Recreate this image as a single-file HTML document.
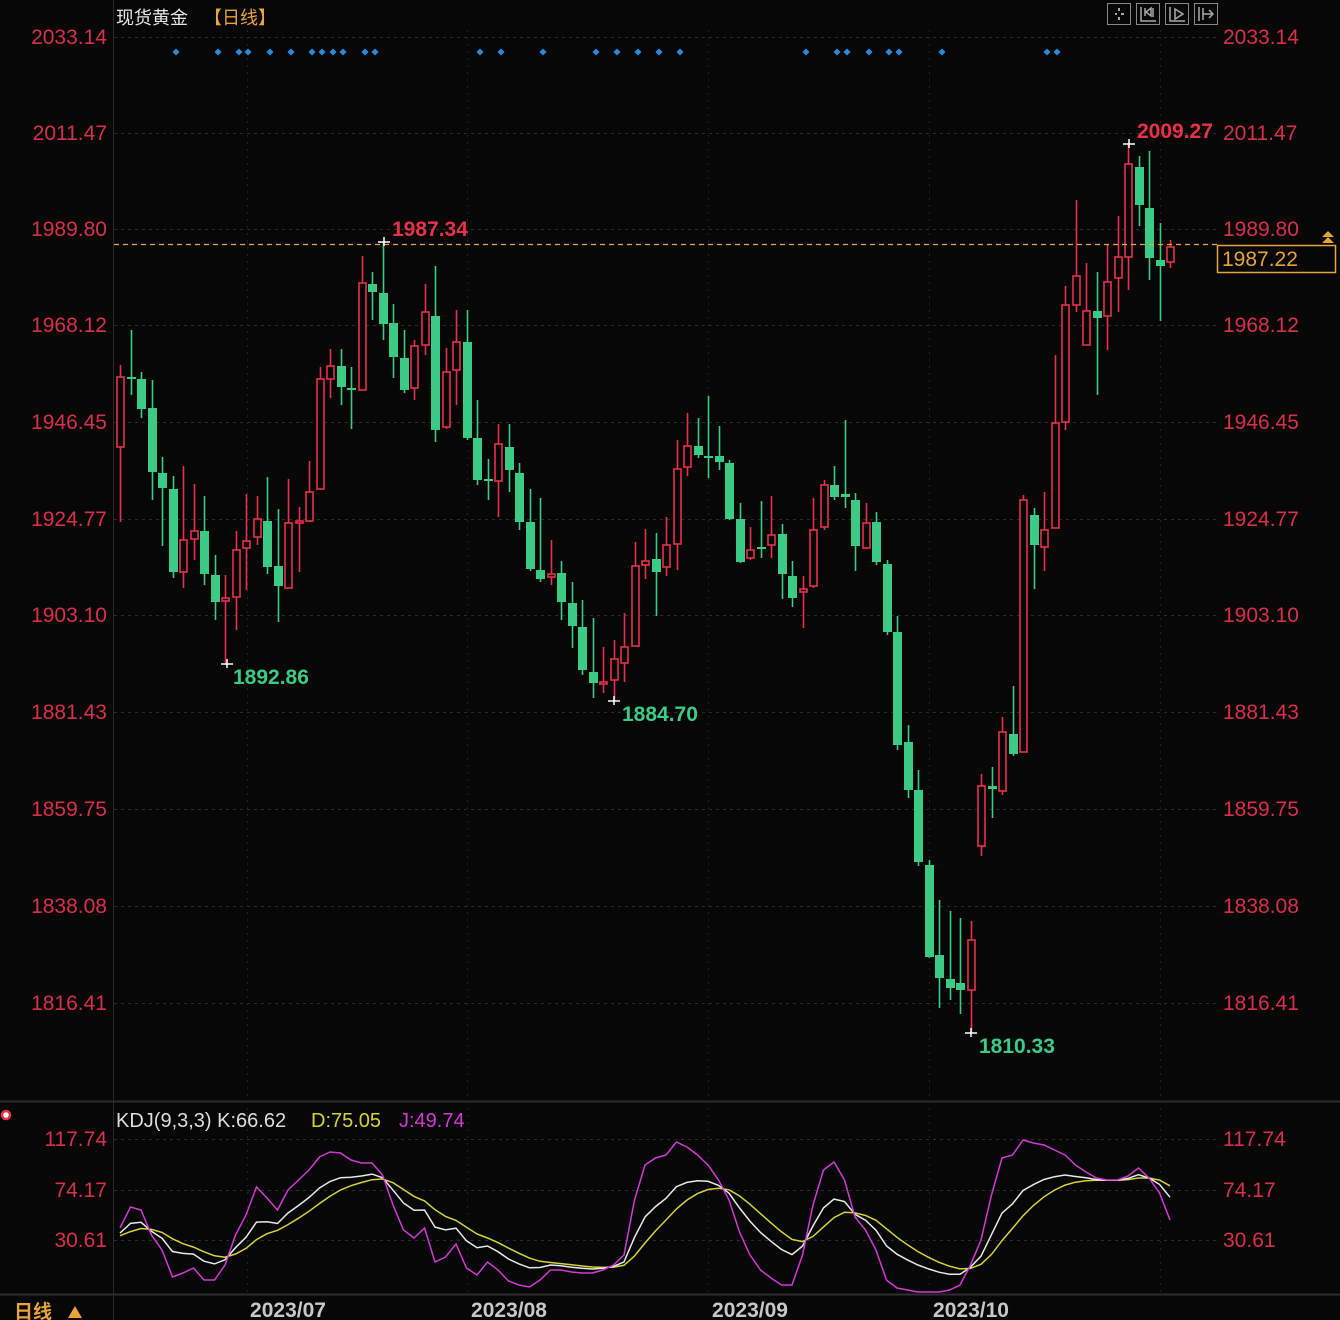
<!DOCTYPE html>
<html><head><meta charset="utf-8">
<style>
html,body{margin:0;padding:0;background:#070707;width:1340px;height:1320px;overflow:hidden}
svg{display:block}
text{font-family:"Liberation Sans","Noto Sans CJK SC",sans-serif}
</style></head>
<body>
<svg id="s" width="1340" height="1320" xmlns="http://www.w3.org/2000/svg"></svg>
<script>
const S=document.getElementById('s');let h='';
const R='#e8304a',G='#3ccb84';
h+='<rect x="0" y="0" width="1340" height="1320" fill="#070707"/>';
h+='<line x1="113.5" y1="0" x2="113.5" y2="1320" stroke="#2a2a2a"/>';
h+='<line x1="0" y1="1101.5" x2="1340" y2="1101.5" stroke="#2e2e2e" stroke-width="2"/>';
h+='<line x1="0" y1="1294.5" x2="1340" y2="1294.5" stroke="#2e2e2e" stroke-width="2"/>';
const levels=[['2033.14',37],['2011.47',133],['1989.80',229],['1968.12',325],['1946.45',422],['1924.77',519],['1903.10',615],['1881.43',712],['1859.75',809],['1838.08',906],['1816.41',1003]];
levels.forEach(([t,y])=>{
 h+=`<line x1="114" y1="${y+.5}" x2="1217" y2="${y+.5}" stroke="#2c2c2c" stroke-dasharray="3,4"/>`;
 h+=`<text x="107" y="${y+7}" fill="#d8304a" font-size="21" text-anchor="end">${t}</text>`;
 h+=`<text x="1223" y="${y+7}" fill="#d8304a" font-size="21">${t}</text>`;
});
[247,467,708,929,1160].forEach(x=>{h+=`<line x1="${x+.5}" y1="30" x2="${x+.5}" y2="1294" stroke="#222" stroke-dasharray="2,5"/>`});
[['117.74',1139],['74.17',1190],['30.61',1240]].forEach(([t,y])=>{
 h+=`<line x1="114" y1="${y+.5}" x2="1217" y2="${y+.5}" stroke="#2c2c2c" stroke-dasharray="3,4"/>`;
 h+=`<text x="107" y="${y+7}" fill="#d8304a" font-size="21" text-anchor="end">${t}</text>`;
 h+=`<text x="1223" y="${y+7}" fill="#d8304a" font-size="21">${t}</text>`;
});
h+='<text x="116" y="24" fill="#e6e6e6" font-size="18">现货黄金</text><text x="204" y="24" fill="#e8a33a" font-size="18">【日线】</text>';
for(let i=0;i<4;i++){const x=1107+i*29;h+=`<rect x="${x+.5}" y="3.5" width="23" height="21" fill="none" stroke="#888"/>`;}
h+='<g stroke="#aaa" stroke-width="2"><line x1="1115" y1="14" x2="1117" y2="14"/><line x1="1121" y1="14" x2="1124" y2="14"/><line x1="1119" y1="8" x2="1119" y2="11"/><line x1="1119" y1="17" x2="1119" y2="20"/></g>';
h+='<g stroke="#aaa" stroke-width="1.5" fill="none"><path d="M1141 7v14h15M1145 8v8M1153 8v9M1146 12l5-4v8z"/><path d="M1170 7v14h15M1175 9l8 5-8 5z"/><path d="M1199 7v14M1203 8v12M1203 14h10M1209 10l4 4-4 4"/></g>';
[176,218,239,248,270,291,312,322,333,343,365,375,480,501,543,596,617,638,659,680,806,837,847,869,889,899,942,1047,1057].forEach(x=>{h+=`<rect x="${x-2.5}" y="49.5" width="5" height="5" fill="#2a8ad8" transform="rotate(45 ${x} 52)"/>`});
const C=[[377,447,365,522,'r'],[377,378,330,395,'g'],[379,409,372,418,'g'],[408,472,380,500,'g'],[473,488,457,546,'g'],[489,572,476,578,'g'],[540,572,466,588,'r'],[531,539,484,560,'r'],[531,574,496,585,'g'],[575,602,555,620,'g'],[598,601,575,665,'r'],[550,597,531,630,'r'],[541,548,494,590,'r'],[519,537,496,545,'r'],[521,567,477,574,'g'],[566,586,509,622,'g'],[523,588,479,575,'r'],[521,523,507,572,'r'],[492,521,461,522,'r'],[379,489,367,490,'r'],[366,379,349,398,'r'],[366,387,349,405,'g'],[388,390,367,429,'g'],[283,390,256,390,'r'],[284,292,272,320,'g'],[293,324,242,340,'g'],[323,357,304,378,'g'],[358,390,330,393,'g'],[346,388,340,400,'r'],[312,345,284,355,'r'],[316,430,266,442,'g'],[372,427,348,429,'r'],[342,370,310,405,'r'],[342,438,310,440,'g'],[438,480,400,485,'g'],[479,481,459,500,'g'],[444,481,424,517,'r'],[447,470,424,492,'g'],[473,522,463,530,'g'],[522,569,489,571,'g'],[570,579,498,582,'g'],[574,577,540,585,'r'],[573,602,561,620,'g'],[603,626,582,648,'g'],[627,670,600,675,'g'],[672,683,618,698,'g'],[682,683,647,693,'r'],[659,680,640,701,'r'],[647,663,613,682,'r'],[566,646,542,646,'r'],[561,565,529,579,'r'],[559,572,533,616,'g'],[545,567,517,576,'r'],[469,544,440,570,'r'],[446,467,413,476,'r'],[446,455,418,458,'g'],[456,458,396,478,'g'],[456,462,426,470,'g'],[463,519,460,520,'g'],[519,562,503,563,'g'],[550,558,527,560,'r'],[547,549,501,558,'g'],[535,545,496,558,'r'],[534,574,524,599,'g'],[576,598,561,607,'g'],[589,592,576,628,'r'],[530,586,498,588,'r'],[485,527,480,530,'r'],[485,497,466,500,'g'],[494,497,420,508,'g'],[500,546,493,571,'g'],[523,548,503,549,'r'],[522,562,512,565,'g'],[564,632,560,635,'g'],[632,745,616,750,'g'],[742,790,725,798,'g'],[790,862,770,866,'g'],[865,957,860,958,'g'],[955,978,900,1008,'g'],[979,988,911,1000,'g'],[983,990,918,1014,'g'],[940,990,921,1033,'r'],[786,846,774,856,'r'],[786,789,767,818,'g'],[732,791,717,795,'r'],[734,754,686,756,'g'],[500,752,495,752,'r'],[515,545,508,589,'g'],[530,547,492,571,'r'],[423,528,355,528,'r'],[305,422,286,430,'r'],[276,305,200,312,'r'],[311,345,263,345,'r'],[311,318,272,395,'g'],[282,316,245,350,'r'],[257,278,216,312,'r'],[164,257,145,290,'r'],[167,205,156,226,'g'],[208,258,151,280,'g'],[260,266,223,321,'g'],[247,262,240,268,'r']];
C.forEach((c,i)=>{const x=Math.round(120+i*10.5)+.5;const [t,b,hi,lo,k]=c;
 if(k=='r'){h+=`<line x1="${x}" y1="${hi}" x2="${x}" y2="${t}" stroke="${R}" stroke-width="1.6"/><line x1="${x}" y1="${b}" x2="${x}" y2="${lo}" stroke="${R}" stroke-width="1.6"/><rect x="${x-3.5}" y="${t}" width="7" height="${Math.max(b-t,2)}" fill="#070707" stroke="${R}" stroke-width="1.6"/>`;}
 else{h+=`<line x1="${x}" y1="${hi}" x2="${x}" y2="${lo}" stroke="${G}" stroke-width="1.6"/><rect x="${x-4.5}" y="${t}" width="9" height="${Math.max(b-t,2)}" fill="${G}"/>`;}
});
h+='<line x1="114" y1="244.5" x2="1217" y2="244.5" stroke="#e8a33a" stroke-dasharray="5,4" stroke-width="1.3"/>';
h+='<rect x="1217.5" y="245.5" width="118" height="27" fill="#070707" stroke="#e8a33a" stroke-width="1.5"/><text x="1222" y="266" fill="#e8a33a" font-size="21">1987.22</text>';
h+='<path d="M1322 237l6-6 6 6zM1322 243l6-6 6 6z" fill="#e8a33a"/>';
function cross(x,y){h+=`<path d="M${x-6} ${y}h12M${x} ${y-5}v9" stroke="#fff" stroke-width="1.5"/>`;}
cross(384,242);cross(1129,144);cross(227,664);cross(614,701);cross(971,1033);
h+=`<text x="392" y="236" fill="${R}" font-size="21" font-weight="bold">1987.34</text>`;
h+=`<text x="1137" y="138" fill="${R}" font-size="21" font-weight="bold">2009.27</text>`;
h+=`<text x="233" y="684" fill="${G}" font-size="21" font-weight="bold">1892.86</text>`;
h+=`<text x="622" y="721" fill="${G}" font-size="21" font-weight="bold">1884.70</text>`;
h+=`<text x="979" y="1053" fill="${G}" font-size="21" font-weight="bold">1810.33</text>`;
h+='<text x="116" y="1127" font-size="20" fill="#ddd">KDJ(9,3,3) K:66.62</text><text x="311" y="1127" font-size="20" fill="#d6d23a">D:75.05</text><text x="399" y="1127" font-size="20" fill="#d23ad6">J:49.74</text>';
h+='<circle cx="6" cy="1115" r="4" fill="#fff" stroke="#e8304a" stroke-width="2.5"/>';
const J=[1228,1207,1210,1235,1250,1277,1273,1268,1280,1280,1265,1235,1215,1187,1198,1210,1190,1180,1170,1157,1152,1153,1160,1163,1163,1175,1205,1230,1238,1228,1262,1257,1244,1268,1275,1262,1270,1281,1285,1287,1280,1270,1270,1272,1273,1273,1270,1265,1255,1200,1165,1158,1155,1142,1147,1155,1165,1180,1200,1232,1255,1270,1278,1285,1285,1255,1205,1170,1162,1180,1217,1230,1250,1280,1288,1290,1292,1292,1292,1290,1285,1265,1240,1195,1158,1155,1140,1143,1145,1150,1155,1165,1172,1178,1180,1180,1176,1168,1178,1193,1220,1220];
const n=C.length;let D=1237,Ks=[],Ds=[],Js=[];
for(let i=0;i<n;i++){const j=J[Math.min(i,J.length-1)];D=(6*D+j)/7;const K=(j+2*D)/3;Ks.push(K);Ds.push(D);Js.push(j);}
function pl(a,col){return `<polyline fill="none" stroke="${col}" stroke-width="1.5" points="${a.map((v,i)=>(120+i*10.5).toFixed(1)+','+v.toFixed(1)).join(' ')}"/>`;}
h+=pl(Ds,'#d6d23a')+pl(Ks,'#e8e8e8')+pl(Js,'#d23ad6');
[['2023/07',288],['2023/08',509],['2023/09',750],['2023/10',971]].forEach(([t,x])=>{h+=`<text x="${x}" y="1317" fill="#c8c8c8" font-size="21" font-weight="bold" text-anchor="middle">${t}</text>`});
h+='<text x="14" y="1318" fill="#e8a33a" font-size="19" font-weight="bold">日线</text><path d="M68 1318l7-12 7 12z" fill="#e8a33a"/>';
S.innerHTML=h;
</script>
</body></html>
